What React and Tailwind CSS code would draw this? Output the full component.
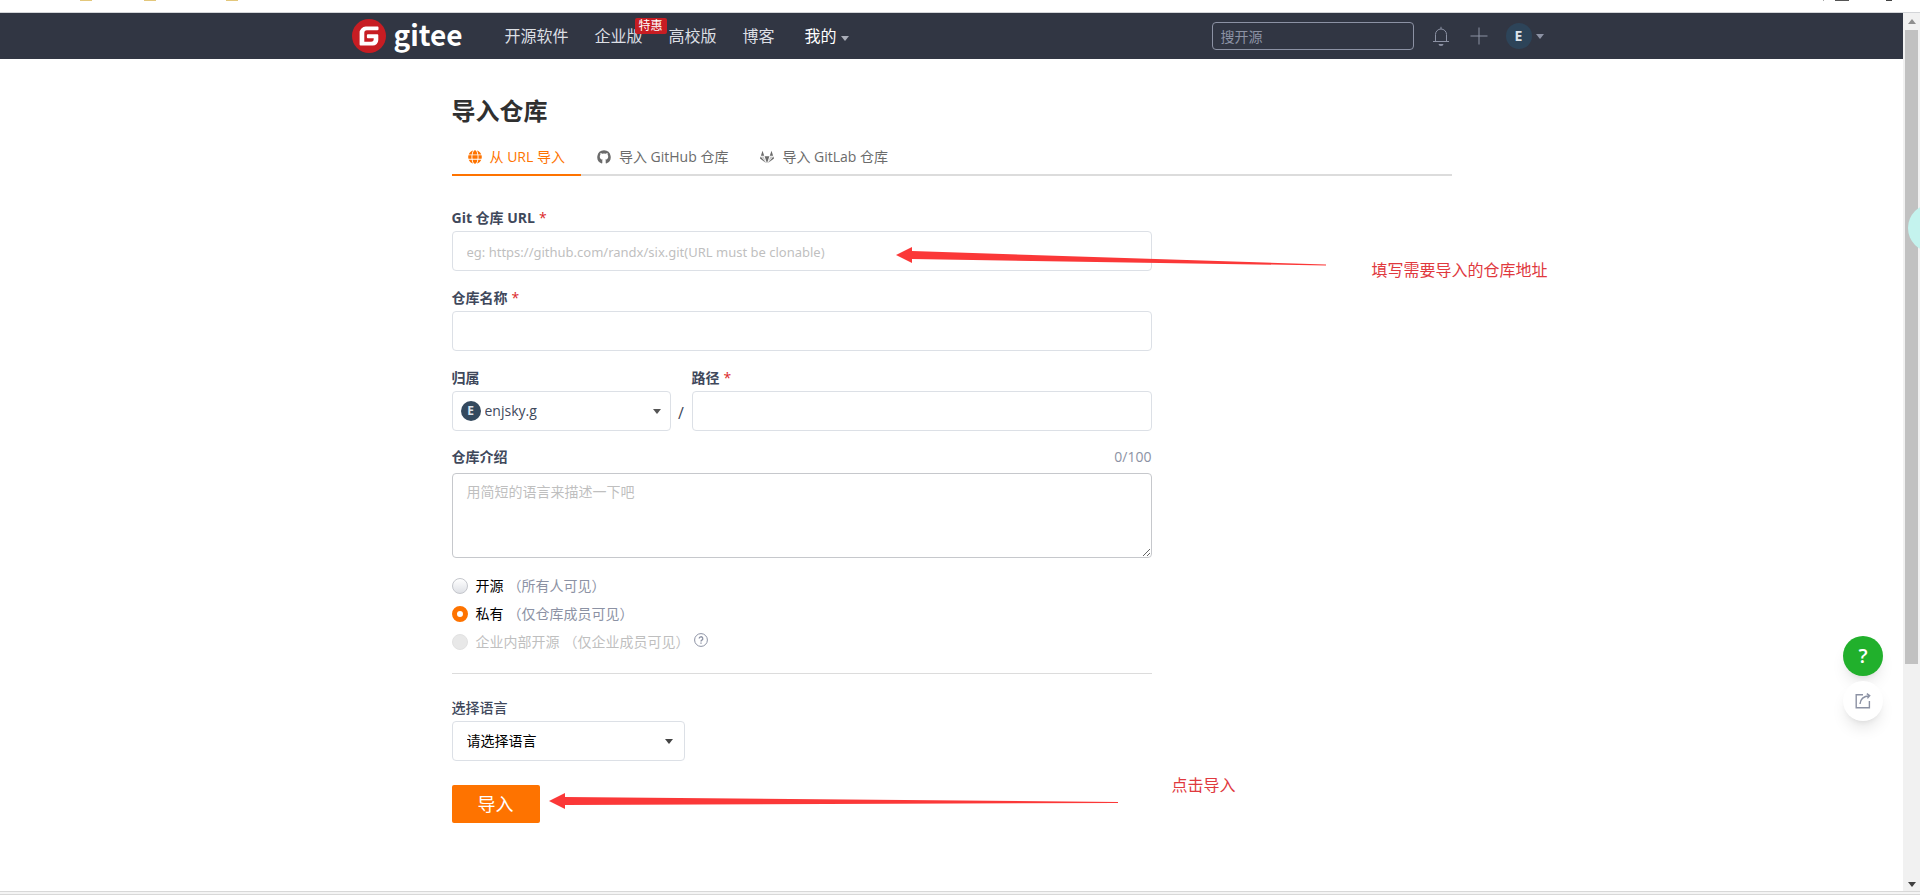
import { FaGlobe } from "react-icons/fa"

const inputClass =
  "block w-full h-10 px-3.5 text-sm text-[#40485b] bg-white border border-[#dce0e6] rounded-sm outline-none placeholder:text-[#bfbfbf]"

function Caret({ className = "" }) {
  return (
    <svg viewBox="0 0 8 5" className={`w-2 h-[5px] fill-current ${className}`} aria-hidden="true">
      <path d="M0 0h8L4 5z" />
    </svg>
  )
}

function Logo() {
  return (
    <a href="#" className="flex items-center gap-2 text-white">
      <svg viewBox="0 0 34 34" className="size-[34px]" aria-hidden="true">
        <circle cx="17" cy="17" r="17" fill="#c71d23" />
        <path
          d="M25.6 7.6H13.8a6.2 6.2 0 0 0-6.2 6.2v11.8c0 .5.4.9.9.9h12.3a5.5 5.5 0 0 0 5.5-5.5v-4.8c0-.5-.4-.9-.9-.9h-9.600c-.5 0-.9.4-.9.9v2.100c0 .5.4.9.9.9h5.900v.9a2.600 2.600 0 0 1-2.600 2.600h-6.800V13.800a2.600 2.600 0 0 1 2.600-2.600h10.700c.5 0 .9-.4.9-.9V8.500c0-.5-.4-.9-.9-.9z"
          fill="#fff"
        />
      </svg>
      <span className="font-['Noto_Sans_CJK_SC',sans-serif] text-[28px] leading-8 font-bold pb-1">gitee</span>
    </a>
  )
}

function Header() {
  return (
    <header className="bg-[#313643] text-[#dcdfe4]">
      <div className="max-w-[1200px] h-[46px] mx-auto flex items-center">
        <Logo />

        <nav className="flex items-center ml-[42px] gap-[26px] text-base">
          <a href="#">开源软件</a>
          <a href="#" className="relative">
            企业版
            <span className="absolute left-10 -top-1.5 px-1 h-4 rounded-xs bg-[#c71d23] text-white text-xs leading-4 whitespace-nowrap">
              特惠
            </span>
          </a>
          <a href="#">高校版</a>
          <a href="#">博客</a>
          <button type="button" className="flex items-center gap-1 ml-1 text-white">
            我的
            <Caret className="mt-1 text-[#a9adb8]" />
          </button>
        </nav>

        <div className="ml-auto flex items-center">
          <input
            type="search"
            aria-label="搜开源"
            placeholder="搜开源"
            className="w-[202px] h-7 px-2 text-sm bg-transparent border border-[#8c92a4] rounded-sm outline-none placeholder:text-[#8c92a4]"
          />
          <button type="button" aria-label="通知" className="ml-[18px] text-[#8c92a4]">
            <svg viewBox="0 0 18 20" className="w-[18px] h-5" fill="none" stroke="currentColor">
              <path d="M1 15.500h16M3.500 15.500V8.500a5.500 5.500 0 0 1 11 0v7M9 3V.8" />
              <path d="M6.500 18h5a2.500 2 0 0 1-5 0z" fill="currentColor" stroke="none" />
            </svg>
          </button>
          <button type="button" aria-label="新建" className="ml-5 text-[#8c92a4]">
            <svg viewBox="0 0 18 18" className="size-[18px]" fill="none" stroke="currentColor">
              <path d="M9 .5v17M.5 9h17" />
            </svg>
          </button>
          <button type="button" aria-label="账户" className="flex items-center gap-1 ml-[18px] mr-2 text-[#8c92a4]">
            <span className="size-[26px] rounded-full bg-[#2d4459] text-[#dde3ea] text-sm leading-[26px] font-bold text-center">
              E
            </span>
            <Caret />
          </button>
        </div>
      </div>
    </header>
  )
}

function GitlabIcon() {
  return (
    <svg viewBox="0 0 14 14" className="size-3.5 fill-current" aria-hidden="true">
      <path d="M2.500.8l1.700 4.900H.9zM11.500.8l1.600 4.900H9.800zM4.600 6.200h4.800L7 13.200zM.6 6.400L0 8.400l6 4.500zM13.400 6.400l.6 2-6 4.500z" />
      <path d="M1.100 6.400h2.600l2.300 6zM12.900 6.400h-2.600L8 12.400z" opacity=".35" />
    </svg>
  )
}

function GithubMark() {
  return (
    <svg viewBox="0 0 14 14" className="size-3.5" fill="currentColor" aria-hidden="true">
      <path d="M7 .3A6.800 6.800 0 0 0 4.800 13.500c.4 0 .5-.2.5-.5v-2.400c0-.5.1-.8.4-1C4 9.300 2.800 8.600 2.800 6.400c0-.7.200-1.300.6-1.700-.1-.5-.1-1.100.1-1.700.6 0 1.200.3 1.700.7a6.500 6.500 0 0 1 3.600 0c.5-.4 1.100-.7 1.700-.7.200.6.200 1.200.1 1.700.4.400.6 1 .6 1.700 0 2.200-1.200 2.900-2.900 3.200.3.200.4.600.4 1V13c0 .3.200.5.5.5A6.800 6.800 0 0 0 7 .3z" />
    </svg>
  )
}

function Tabs() {
  const tab = "flex items-center gap-2 h-9 px-4 -mb-0.5 border-b-2"
  return (
    <nav className="flex border-b-2 border-[#dcdcdc] text-sm text-[#6b6b6b]">
      <a href="#url" className={`${tab} border-[#fe7300] text-[#fe7300]`}>
        <FaGlobe className="size-3.5" />
        从 URL 导入
      </a>
      <a href="#github" className={`${tab} border-transparent`}>
        <GithubMark />
        导入 GitHub 仓库
      </a>
      <a href="#gitlab" className={`${tab} border-transparent`}>
        <GitlabIcon />
        导入 GitLab 仓库
      </a>
    </nav>
  )
}

function Label({ htmlFor, required, children }) {
  return (
    <label htmlFor={htmlFor} className="block mb-[3px] text-sm leading-5 font-bold text-[#40485b]">
      {children}
      {required && <span className="ml-1 font-normal text-[#db2828]">*</span>}
    </label>
  )
}

function Visibility({ id, label, hint, disabled, defaultChecked, children }) {
  return (
    <div className="flex items-center h-5 text-sm">
      <input
        id={id}
        type="radio"
        name="visibility"
        disabled={disabled}
        defaultChecked={defaultChecked}
        className="appearance-none size-4 mr-2 rounded-full border border-[#c4c6cc] bg-linear-to-b from-white to-[#dfe1e6] checked:border-[5px] checked:border-[#fe7300] checked:bg-none checked:bg-white disabled:border-[#e2e2e2] disabled:bg-none disabled:bg-[#e8e8e8]"
      />
      <label htmlFor={id} className={disabled ? "text-[#bfbfbf]" : "text-black"}>
        {label}
        <span className={disabled ? "ml-1" : "ml-1 text-[#8c92a4]"}>{hint}</span>
      </label>
      {children}
    </div>
  )
}

function ImportForm() {
  return (
    <form className="max-w-[700px] mt-8" onSubmit={(e) => e.preventDefault()}>
      <div className="relative mb-[17px]">
        <Label htmlFor="git-url" required>Git 仓库 URL</Label>
        <input
          id="git-url"
          className={`${inputClass} placeholder:font-['Noto_Sans',sans-serif] placeholder:text-[13px]`}
          placeholder="eg: https://github.com/randx/six.git(URL must be clonable)"
        />

        {/* pointer to the url field */}
        <svg viewBox="0 0 430 24" className="absolute left-[444px] top-9 w-[430px] h-6 fill-[#fb3838]" aria-hidden="true">
          <path d="M0 11L16 3v4l414 13.500v1L16 15v4z" />
        </svg>
        <p className="absolute left-[920px] top-[50px] text-base leading-6 text-[#e0393e] whitespace-nowrap">
          填写需要导入的仓库地址
        </p>
      </div>

      <div className="mb-[17px]">
        <Label htmlFor="repo-name" required>仓库名称</Label>
        <input id="repo-name" className={inputClass} />
      </div>

      <div className="flex items-end mb-4">
        <div className="w-[219px]">
          <Label htmlFor="namespace">归属</Label>
          <div className="relative">
            <select id="namespace" className={`${inputClass} appearance-none pl-8`}>
              <option>enjsky.g</option>
            </select>
            <span className="absolute left-[9px] top-2.5 size-5 rounded-full bg-[#34495e] text-[#dde3ea] text-xs leading-5 font-bold text-center">
              E
            </span>
            <Caret className="absolute right-2.5 top-[18px] text-[#555]" />
          </div>
        </div>
        <span className="w-[21px] h-9 text-base leading-9 text-center text-[#40485b]">/</span>
        <div className="flex-1">
          <Label htmlFor="repo-path" required>路径</Label>
          <input id="repo-path" className={inputClass} />
        </div>
      </div>

      <div className="mb-[18px]">
        <div className="flex justify-between mb-[3px]">
          <Label htmlFor="description">仓库介绍</Label>
          <span className="text-sm leading-5 text-[#8c92a4]">0/100</span>
        </div>
        <textarea
          id="description"
          placeholder="用简短的语言来描述一下吧"
          className="block w-full h-[85px] px-3.5 py-2 text-sm border border-[#c6c8cc] rounded-sm outline-none resize placeholder:text-[#bfbfbf]"
        />
      </div>

      <div className="flex flex-col gap-2 pb-[21px] border-b border-[#dcdcdc]">
        <Visibility id="public" label="开源" hint="（所有人可见）" />
        <Visibility id="private" label="私有" hint="（仅仓库成员可见）" defaultChecked />
        <Visibility id="internal" label="企业内部开源" hint="（仅企业成员可见）" disabled>
          <svg viewBox="0 0 14 14" className="size-3.5 ml-1 mb-1 text-[#8c92a4]" fill="none" stroke="currentColor" aria-hidden="true">
            <circle cx="7" cy="7" r="6.400" />
            <path d="M5.200 5.600a1.800 1.800 0 1 1 2.700 1.500c-.6.4-.9.6-.9 1.300M7 9.500v1.200" strokeWidth="1.300" />
          </svg>
        </Visibility>
      </div>

      <div className="mt-6 mb-6">
        <label htmlFor="language" className="block mb-[3px] text-sm leading-5 font-medium text-[#40485b]">选择语言</label>
        <div className="relative w-[233px]">
          <select id="language" className={`${inputClass} appearance-none text-black`}>
            <option>请选择语言</option>
          </select>
          <Caret className="absolute right-3 top-[18px] text-[#444]" />
        </div>
      </div>

      <div className="relative">
        <button type="submit" className="block w-[88px] h-[38px] rounded-xs bg-[#fe7300] text-lg text-white">
          导入
        </button>

        {/* pointer to the submit button */}
        <svg viewBox="0 0 570 16" className="absolute left-[97px] top-2 w-[570px] h-4 fill-[#fb3838]" aria-hidden="true">
          <path d="M0 8L16 0v4l553 5v1L16 12v4z" />
        </svg>
        <p className="absolute left-[720px] -top-3 text-base leading-6 text-[#e0393e] whitespace-nowrap">点击导入</p>
      </div>
    </form>
  )
}

function FloatingTools() {
  return (
    <div className="absolute right-5 top-[623px] flex flex-col gap-[5px]">
      <button type="button" aria-label="帮助" className="size-10 rounded-full bg-[#21b02c] text-white text-xl font-semibold shadow-lg shadow-black/10">
        ?
      </button>
      <button type="button" aria-label="反馈" className="size-10 flex items-center justify-center rounded-full bg-white text-[#8c92a4] shadow-lg shadow-black/10">
        <svg viewBox="0 0 16 16" className="size-4" fill="none" stroke="currentColor" strokeWidth="1.400">
          <path d="M8 1.700H1.200v13.100h13.200V8M5 11c.3-4.500 3-7.800 9.500-8.300M11.800.6l2.900 2.100-2.300 2.700" />
        </svg>
      </button>
    </div>
  )
}

function Scrollbar() {
  return (
    <div className="w-[17px] flex flex-col items-center bg-[#f1f1f1]" aria-hidden="true">
      <Caret className="my-1.5 rotate-180 text-[#8f8f8f]" />
      <div className="w-[13px] h-[634px] bg-[#c1c1c1]" />
      <Caret className="mt-auto mb-1 text-[#404040]" />
    </div>
  )
}

// lower edge of the browser toolbar
function ToolbarEdge() {
  return (
    <div className="h-[13px] flex items-start border-b border-[#d3d5d8] bg-white" aria-hidden="true">
      <span className="ml-20 w-3 h-px bg-[#e3c77b]" />
      <span className="ml-[52px] w-3 h-px bg-[#e3c77b]" />
      <span className="ml-[70px] w-3 h-px bg-[#e3c77b]" />
      <span className="ml-auto w-px h-px bg-[#aaa]" />
      <span className="ml-[11px] w-3.5 h-px bg-[#555]" />
      <span className="ml-[37px] mr-7 w-1.5 h-px bg-[#444]" />
    </div>
  )
}

export default function App() {
  return (
    <div className="relative min-h-screen flex flex-col overflow-hidden bg-white font-['Open_Sans','Noto_Sans_CJK_SC',sans-serif]">
      <ToolbarEdge />

      <div className="flex-1 flex">
        <div className="relative flex-1 min-w-0">
          <Header />
          <main className="max-w-[1000px] mx-auto pt-9">
            <h1 className="mb-[13px] text-2xl leading-8 font-bold text-[#303030]">导入仓库</h1>
            <Tabs />
            <ImportForm />
          </main>
          <FloatingTools />
        </div>
        <Scrollbar />
      </div>

      <div className="h-1 border-y border-[#d8d8d8] bg-[#f4f4f4]" />

      {/* assistant bubble peeking in from the edge */}
      <div className="absolute -right-9 top-[204px] size-12 rounded-full bg-[#c4f3ee]" />
    </div>
  )
}
